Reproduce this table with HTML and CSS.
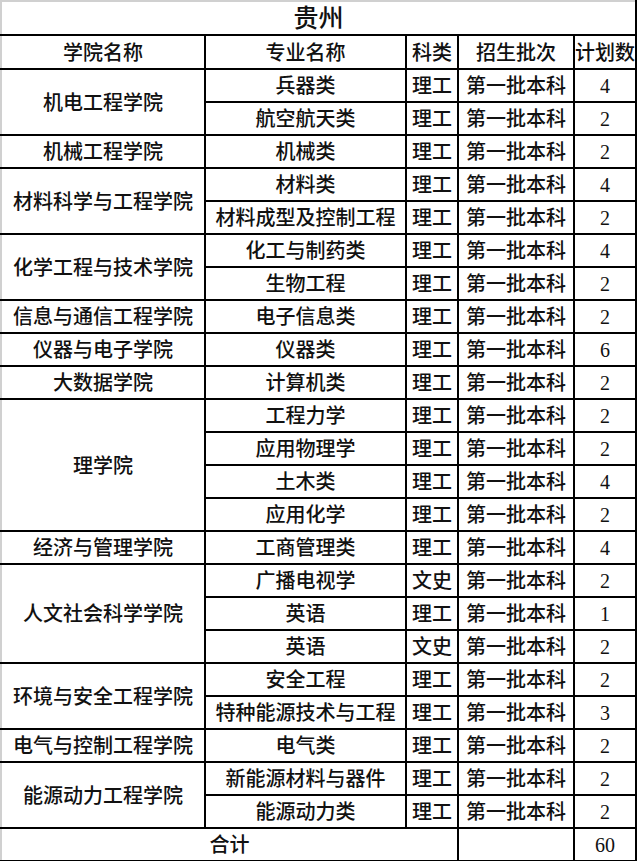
FILE: index.html
```html
<!DOCTYPE html>
<html lang="zh">
<head>
<meta charset="utf-8">
<link rel="stylesheet" href="styles.css">
</head>
<body>
<table class="plan">
  <colgroup>
    <col class="c-college"><col class="c-major"><col class="c-type"><col class="c-batch"><col class="c-num">
  </colgroup>
  <tr class="title"><td colspan="5">贵州</td></tr>
  <tr class="head"><td>学院名称</td><td>专业名称</td><td>科类</td><td>招生批次</td><td>计划数</td></tr>
  <tr><td rowspan="2">机电工程学院</td><td>兵器类</td><td>理工</td><td>第一批本科</td><td class="n">4</td></tr>
  <tr><td>航空航天类</td><td>理工</td><td>第一批本科</td><td class="n">2</td></tr>
  <tr><td>机械工程学院</td><td>机械类</td><td>理工</td><td>第一批本科</td><td class="n">2</td></tr>
  <tr><td rowspan="2">材料科学与工程学院</td><td>材料类</td><td>理工</td><td>第一批本科</td><td class="n">4</td></tr>
  <tr><td>材料成型及控制工程</td><td>理工</td><td>第一批本科</td><td class="n">2</td></tr>
  <tr><td rowspan="2">化学工程与技术学院</td><td>化工与制药类</td><td>理工</td><td>第一批本科</td><td class="n">4</td></tr>
  <tr><td>生物工程</td><td>理工</td><td>第一批本科</td><td class="n">2</td></tr>
  <tr><td>信息与通信工程学院</td><td>电子信息类</td><td>理工</td><td>第一批本科</td><td class="n">2</td></tr>
  <tr><td>仪器与电子学院</td><td>仪器类</td><td>理工</td><td>第一批本科</td><td class="n">6</td></tr>
  <tr><td>大数据学院</td><td>计算机类</td><td>理工</td><td>第一批本科</td><td class="n">2</td></tr>
  <tr><td rowspan="4">理学院</td><td>工程力学</td><td>理工</td><td>第一批本科</td><td class="n">2</td></tr>
  <tr><td>应用物理学</td><td>理工</td><td>第一批本科</td><td class="n">2</td></tr>
  <tr><td>土木类</td><td>理工</td><td>第一批本科</td><td class="n">4</td></tr>
  <tr><td>应用化学</td><td>理工</td><td>第一批本科</td><td class="n">2</td></tr>
  <tr><td>经济与管理学院</td><td>工商管理类</td><td>理工</td><td>第一批本科</td><td class="n">4</td></tr>
  <tr><td rowspan="3">人文社会科学学院</td><td>广播电视学</td><td>文史</td><td>第一批本科</td><td class="n">2</td></tr>
  <tr><td>英语</td><td>理工</td><td>第一批本科</td><td class="n">1</td></tr>
  <tr><td>英语</td><td>文史</td><td>第一批本科</td><td class="n">2</td></tr>
  <tr><td rowspan="2">环境与安全工程学院</td><td>安全工程</td><td>理工</td><td>第一批本科</td><td class="n">2</td></tr>
  <tr><td>特种能源技术与工程</td><td>理工</td><td>第一批本科</td><td class="n">3</td></tr>
  <tr><td>电气与控制工程学院</td><td>电气类</td><td>理工</td><td>第一批本科</td><td class="n">2</td></tr>
  <tr><td rowspan="2">能源动力工程学院</td><td>新能源材料与器件</td><td>理工</td><td>第一批本科</td><td class="n">2</td></tr>
  <tr><td>能源动力类</td><td>理工</td><td>第一批本科</td><td class="n">2</td></tr>
  <tr class="total"><td colspan="3">合计</td><td></td><td class="n">60</td></tr>
</table>
</body>
</html>
```
FILE: styles.css
```css
html, body {
  margin: 0;
  padding: 0;
  background: #fff;
}
.plan {
  border-collapse: collapse;
  table-layout: fixed;
  width: 635px;
  font-family: "Liberation Serif", "Noto Sans CJK SC", serif;
  font-size: 20px;
  font-weight: 500;
  color: #111;
}
.c-college { width: 204px; }
.c-major { width: 201px; }
.c-type { width: 52px; }
.c-batch { width: 116px; }
.c-num { width: 62px; }
.plan td {
  border: 2px solid #000;
  text-align: center;
  vertical-align: middle;
  padding: 1px 0 0;
  height: 30px;
  line-height: 22px;
  white-space: nowrap;
  overflow: hidden;
}
.plan tr.title td {
  font-size: 25px;
  height: 31px;
  border-top: 2px solid #d0d0d0;
  border-left: 2px solid #d0d0d0;
}
.plan tr.head td {
  height: 31px;
}
.plan tr td:first-child {
  border-left: 2px solid #d0d0d0;
}
.plan td.n {
  font-size: 20px;
}
.plan tr.total td {
  height: 30px;
}
```
